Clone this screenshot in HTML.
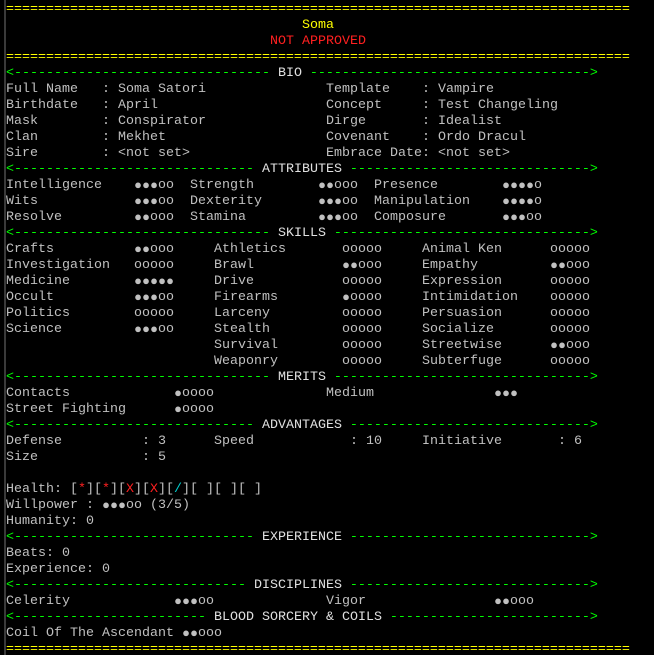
<!DOCTYPE html>
<html><head><meta charset="utf-8"><style>
html,body{margin:0;padding:0;background:#000;width:654px;height:655px;overflow:hidden}
body{position:relative;font-family:"Liberation Mono","DejaVu Sans Mono",monospace;font-size:13.33px;color:#c0c0c0}
.bar{position:absolute;left:4px;top:0;width:2px;height:655px;background:#3a3a3a}
.w{position:absolute;left:0;top:2px;width:654px;height:655px}
.r{position:absolute;height:16px;line-height:16px;white-space:pre}
.r span{position:absolute;top:0;white-space:pre}
.y{color:#ffff00}.g{color:#00ff00}.red{color:#ff2020}.c{color:#00d0d0}
.t{background:#000;color:#e0e0e0}
b{display:inline-block;width:8px;text-align:center;font-weight:normal;font-size:13px;line-height:16px;vertical-align:top}
</style></head><body>
<div class="bar"></div>
<div class="w">
<div class="r y" style="top:0;left:6px">==============================================================================</div>
<div class="r y" style="top:16px;left:302px">Soma</div>
<div class="r red" style="top:32px;left:270px">NOT APPROVED</div>
<div class="r y" style="top:48px;left:6px">==============================================================================</div>

<div class="r g" style="top:64px;left:6px">&lt;------------------------------------------------------------------------&gt;<span class="t" style="left:264px"> BIO </span></div>
<div class="r" style="top:80px;left:6px">Full Name   : Soma Satori<span style="left:320px">Template    : Vampire</span></div>
<div class="r" style="top:96px;left:6px">Birthdate   : April<span style="left:320px">Concept     : Test Changeling</span></div>
<div class="r" style="top:112px;left:6px">Mask        : Conspirator<span style="left:320px">Dirge       : Idealist</span></div>
<div class="r" style="top:128px;left:6px">Clan        : Mekhet<span style="left:320px">Covenant    : Ordo Dracul</span></div>
<div class="r" style="top:144px;left:6px">Sire        : &lt;not set&gt;<span style="left:320px">Embrace Date: &lt;not set&gt;</span></div>

<div class="r g" style="top:160px;left:6px">&lt;------------------------------------------------------------------------&gt;<span class="t" style="left:248px"> ATTRIBUTES </span></div>
<div class="r" style="top:176px;left:6px">Intelligence<span style="left:128px"><b>●</b><b>●</b><b>●</b>oo</span><span style="left:184px">Strength</span><span style="left:312px"><b>●</b><b>●</b>ooo</span><span style="left:368px">Presence</span><span style="left:496px"><b>●</b><b>●</b><b>●</b><b>●</b>o</span></div>
<div class="r" style="top:192px;left:6px">Wits<span style="left:128px"><b>●</b><b>●</b><b>●</b>oo</span><span style="left:184px">Dexterity</span><span style="left:312px"><b>●</b><b>●</b><b>●</b>oo</span><span style="left:368px">Manipulation</span><span style="left:496px"><b>●</b><b>●</b><b>●</b><b>●</b>o</span></div>
<div class="r" style="top:208px;left:6px">Resolve<span style="left:128px"><b>●</b><b>●</b>ooo</span><span style="left:184px">Stamina</span><span style="left:312px"><b>●</b><b>●</b><b>●</b>oo</span><span style="left:368px">Composure</span><span style="left:496px"><b>●</b><b>●</b><b>●</b>oo</span></div>

<div class="r g" style="top:224px;left:6px">&lt;------------------------------------------------------------------------&gt;<span class="t" style="left:264px"> SKILLS </span></div>
<div class="r" style="top:240px;left:6px">Crafts<span style="left:128px"><b>●</b><b>●</b>ooo</span><span style="left:208px">Athletics</span><span style="left:336px">ooooo</span><span style="left:416px">Animal Ken</span><span style="left:544px">ooooo</span></div>
<div class="r" style="top:256px;left:6px">Investigation<span style="left:128px">ooooo</span><span style="left:208px">Brawl</span><span style="left:336px"><b>●</b><b>●</b>ooo</span><span style="left:416px">Empathy</span><span style="left:544px"><b>●</b><b>●</b>ooo</span></div>
<div class="r" style="top:272px;left:6px">Medicine<span style="left:128px"><b>●</b><b>●</b><b>●</b><b>●</b><b>●</b></span><span style="left:208px">Drive</span><span style="left:336px">ooooo</span><span style="left:416px">Expression</span><span style="left:544px">ooooo</span></div>
<div class="r" style="top:288px;left:6px">Occult<span style="left:128px"><b>●</b><b>●</b><b>●</b>oo</span><span style="left:208px">Firearms</span><span style="left:336px"><b>●</b>oooo</span><span style="left:416px">Intimidation</span><span style="left:544px">ooooo</span></div>
<div class="r" style="top:304px;left:6px">Politics<span style="left:128px">ooooo</span><span style="left:208px">Larceny</span><span style="left:336px">ooooo</span><span style="left:416px">Persuasion</span><span style="left:544px">ooooo</span></div>
<div class="r" style="top:320px;left:6px">Science<span style="left:128px"><b>●</b><b>●</b><b>●</b>oo</span><span style="left:208px">Stealth</span><span style="left:336px">ooooo</span><span style="left:416px">Socialize</span><span style="left:544px">ooooo</span></div>
<div class="r" style="top:336px;left:6px"><span style="left:208px">Survival</span><span style="left:336px">ooooo</span><span style="left:416px">Streetwise</span><span style="left:544px"><b>●</b><b>●</b>ooo</span></div>
<div class="r" style="top:352px;left:6px"><span style="left:208px">Weaponry</span><span style="left:336px">ooooo</span><span style="left:416px">Subterfuge</span><span style="left:544px">ooooo</span></div>

<div class="r g" style="top:368px;left:6px">&lt;------------------------------------------------------------------------&gt;<span class="t" style="left:264px"> MERITS </span></div>
<div class="r" style="top:384px;left:6px">Contacts<span style="left:168px"><b>●</b>oooo</span><span style="left:320px">Medium</span><span style="left:488px"><b>●</b><b>●</b><b>●</b></span></div>
<div class="r" style="top:400px;left:6px">Street Fighting<span style="left:168px"><b>●</b>oooo</span></div>

<div class="r g" style="top:416px;left:6px">&lt;------------------------------------------------------------------------&gt;<span class="t" style="left:248px"> ADVANTAGES </span></div>
<div class="r" style="top:432px;left:6px">Defense<span style="left:136px">: 3</span><span style="left:208px">Speed</span><span style="left:344px">: 10</span><span style="left:416px">Initiative</span><span style="left:552px">: 6</span></div>
<div class="r" style="top:448px;left:6px">Size<span style="left:136px">: 5</span></div>

<div class="r" style="top:480px;left:6px">Health: [<span class="red" style="position:static">*</span>][<span class="red" style="position:static">*</span>][<span class="red" style="position:static">X</span>][<span class="red" style="position:static">X</span>][<span class="c" style="position:static">/</span>][ ][ ][ ]</div>
<div class="r" style="top:496px;left:6px">Willpower : <b>●</b><b>●</b><b>●</b>oo (3/5)</div>
<div class="r" style="top:512px;left:6px">Humanity: 0</div>

<div class="r g" style="top:528px;left:6px">&lt;------------------------------------------------------------------------&gt;<span class="t" style="left:248px"> EXPERIENCE </span></div>
<div class="r" style="top:544px;left:6px">Beats: 0</div>
<div class="r" style="top:560px;left:6px">Experience: 0</div>

<div class="r g" style="top:576px;left:6px">&lt;------------------------------------------------------------------------&gt;<span class="t" style="left:240px"> DISCIPLINES </span></div>
<div class="r" style="top:592px;left:6px">Celerity<span style="left:168px"><b>●</b><b>●</b><b>●</b>oo</span><span style="left:320px">Vigor</span><span style="left:488px"><b>●</b><b>●</b>ooo</span></div>

<div class="r g" style="top:608px;left:6px">&lt;------------------------------------------------------------------------&gt;<span class="t" style="left:200px"> BLOOD SORCERY &amp; COILS </span></div>
<div class="r" style="top:624px;left:6px">Coil Of The Ascendant <b>●</b><b>●</b>ooo</div>
<div class="r y" style="top:640px;left:6px">==============================================================================</div>
</div>
</body></html>
